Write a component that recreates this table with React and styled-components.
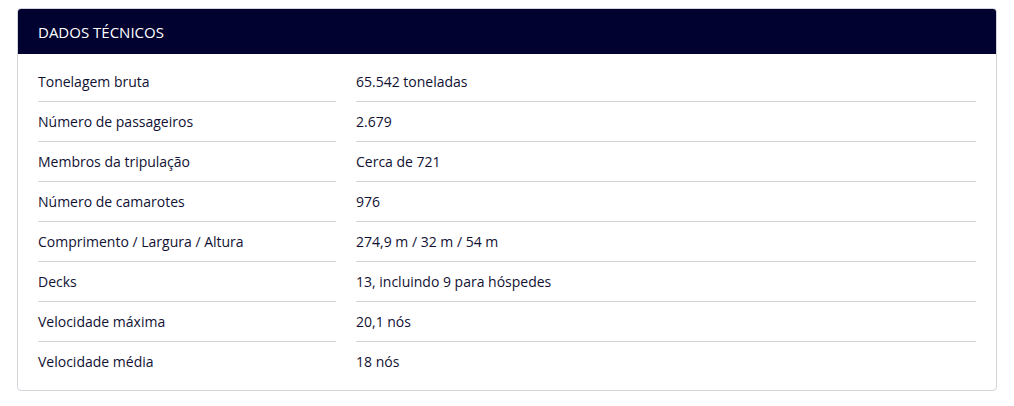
import React from "react";
import styled, { createGlobalStyle } from "styled-components";

const Global = createGlobalStyle`
  html, body { margin: 0; padding: 0; background: #ffffff; }
  body { font-family: "Open Sans", "Noto Sans", sans-serif; }
`;

const Page = styled.div`
  padding: 8px 17px;
`;

const Card = styled.section`
  border: 1px solid #d3d3da;
  border-radius: 4px;
  background: #fff;
  overflow: hidden;
`;

const Header = styled.h2`
  margin: 0;
  height: 45px;
  display: flex;
  align-items: center;
  padding: 0 20px;
  background: #020230;
  color: #ffffff;
  font-size: 15px;
  font-weight: 400;
  text-transform: uppercase;
`;

const Body = styled.div`
  padding: 8px 20px 8px;
`;

const Row = styled.div`
  display: grid;
  grid-template-columns: 298px 1fr;
  column-gap: 20px;
`;

const Cell = styled.div`
  height: 40px;
  display: flex;
  align-items: center;
  font-size: 14px;
  color: #111133;
  border-bottom: 1px solid ${(p) => (p.$last ? "transparent" : "#d3d3d8")};
  box-sizing: border-box;
`;

const data = [
  ["Tonelagem bruta", "65.542 toneladas"],
  ["Número de passageiros", "2.679"],
  ["Membros da tripulação", "Cerca de 721"],
  ["Número de camarotes", "976"],
  ["Comprimento / Largura / Altura", "274,9 m / 32 m / 54 m"],
  ["Decks", "13, incluindo 9 para hóspedes"],
  ["Velocidade máxima", "20,1 nós"],
  ["Velocidade média", "18 nós"],
];

export default function App() {
  return (
    <Page>
      <Global />
      <Card>
        <Header>Dados técnicos</Header>
        <Body>
          {data.map(([k, v], i) => (
            <Row key={k}>
              <Cell $last={i === data.length - 1}>{k}</Cell>
              <Cell $last={i === data.length - 1}>{v}</Cell>
            </Row>
          ))}
        </Body>
      </Card>
    </Page>
  );
}
